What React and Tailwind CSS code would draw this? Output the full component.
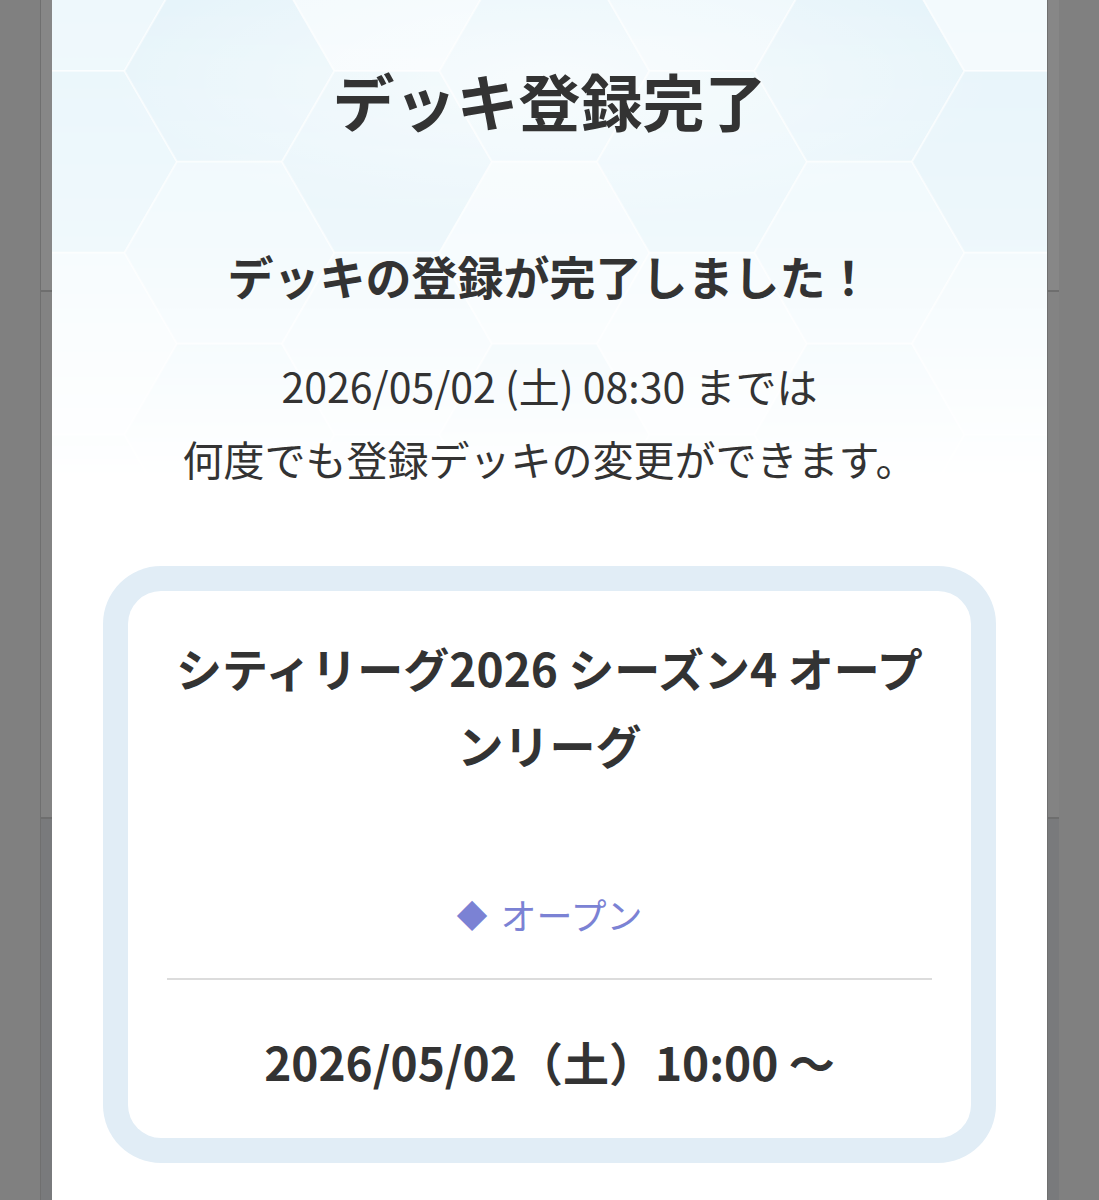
import React from "react";

const S = 105;
const H = Math.sqrt(3) * S;
const tones = ["#eef8fc", "#e9f6fb", "#f3fafd", "#e6f4fa"];

function hexPoints(cx, cy) {
  return [
    [cx - S, cy],
    [cx - S / 2, cy - H / 2],
    [cx + S / 2, cy - H / 2],
    [cx + S, cy],
    [cx + S / 2, cy + H / 2],
    [cx - S / 2, cy + H / 2],
  ]
    .map((p) => p.join(","))
    .join(" ");
}

function HexBackground() {
  const hexes = [];
  for (let i = -1; i < 9; i++) {
    for (let j = -1; j < 4; j++) {
      const cx = i * 1.5 * S + 20;
      const cy = j * H + (i % 2 !== 0 ? H / 2 : 0) - 20;
      hexes.push({ key: `${i}-${j}`, points: hexPoints(cx, cy), fill: tones[Math.abs(i * 3 + j * 5) % 4] });
    }
  }
  return (
    <svg className="absolute left-0 top-0" width="995" height="480" viewBox="0 0 995 480">
      <defs>
        <linearGradient id="fade" x1="0" y1="0" x2="0" y2="1">
          <stop offset="0" stopColor="#fff" stopOpacity="1" />
          <stop offset="0.5" stopColor="#fff" stopOpacity="0.7" />
          <stop offset="1" stopColor="#fff" stopOpacity="0" />
        </linearGradient>
        <mask id="fadeMask">
          <rect width="995" height="480" fill="url(#fade)" />
        </mask>
        <radialGradient id="glow" cx="0.5" cy="0.25" r="0.45">
          <stop offset="0" stopColor="#ffffff" stopOpacity="0.6" />
          <stop offset="1" stopColor="#ffffff" stopOpacity="0" />
        </radialGradient>
      </defs>
      <g mask="url(#fadeMask)">
        <rect width="995" height="480" fill="#ecf7fb" />
        {hexes.map((h) => (
          <polygon key={h.key} points={h.points} fill={h.fill} stroke="#ffffff" strokeWidth="2" strokeOpacity="0.5" />
        ))}
        <rect width="995" height="320" fill="url(#glow)" />
      </g>
    </svg>
  );
}

function SideStrip() {
  return (
    <div className="flex w-[12px] flex-col border-l border-[#6f6f6f]">
      <div className="h-[290px] bg-[#878787]" />
      <div className="h-[527px] border-t-2 border-[#6e6e6e] bg-[#838383]" />
      <div className="flex-1 border-t-2 border-[#6e6e6e] bg-[#797a7c]" />
    </div>
  );
}

export default function App() {
  return (
    <div
      className="flex h-[1200px] w-[1099px] overflow-hidden bg-[#808080] text-[#333333]"
      style={{ fontFamily: '"Noto Sans CJK JP", "Noto Sans", sans-serif' }}
    >
      <div className="w-[40px]" />
      <SideStrip />

      <main className="relative w-[995px] bg-white">
        <HexBackground />

        <div className="relative flex flex-col items-center pt-[55px]">
          <h1 className="text-[62px] font-bold leading-[90px]">デッキ登録完了</h1>

          <h2 className="mt-[96px] text-[46px] font-bold leading-[68px]">デッキの登録が完了しました！</h2>

          <p className="mt-[40px] text-center text-[41px] leading-[73px]">
            2026/05/02 (土) 08:30 までは
            <br />
            何度でも登録デッキの変更ができます。
          </p>

          <div className="mt-[71px] w-[893px] rounded-[58px] bg-[#e1edf6] p-[25px]">
            <div className="flex flex-col items-center rounded-[33px] bg-white px-[39px] pb-[47px] pt-[38px]">
              <h3 className="text-center text-[46px] font-bold leading-[77px]">
                シティリーグ2026 シーズン4 オープンリーグ
              </h3>

              <div className="mt-[106px] flex items-center gap-[13px] text-[36px] leading-[50px] text-[#7b82d4]">
                <span className="text-[31px]">◆</span>
                <span>オープン</span>
              </div>

              <div className="mt-[39px] h-[2px] w-full bg-[#dcdcdc]" />

              <p className="mt-[51px] text-[46px] font-bold leading-[60px]">2026/05/02（土）10:00 〜</p>
            </div>
          </div>
        </div>
      </main>

      <SideStrip />
    </div>
  );
}
